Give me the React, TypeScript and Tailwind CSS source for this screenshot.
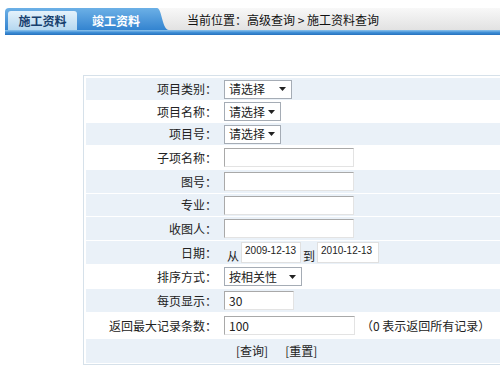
import React from "react";

const font = { fontFamily: '"Noto Sans CJK SC", "Noto Sans", sans-serif' };

function Select({ label, w }: { label: string; w: number }) {
  return (
    <div
      className="flex items-center justify-between h-[19px] border border-[#a5acb5] bg-white pl-[4px] pr-[5px] text-[12px] text-[#222]"
      style={{ width: w }}
    >
      <span>{label}</span>
      <svg width="7" height="4" viewBox="0 0 7 4">
        <path d="M0 0h7L3.5 4z" fill="#222" />
      </svg>
    </div>
  );
}

function Input({ w, value }: { w: number; value?: string }) {
  return (
    <div
      className="flex items-center h-[19px] border-t border-l border-[#a9a9a9] border-r border-b border-r-[#e3e3e3] border-b-[#e3e3e3] bg-white pl-[4px] text-[12px] text-[#222]"
      style={{ width: w }}
    >
      {value}
    </div>
  );
}

type Row = { label: string; content: React.ReactNode; blue: boolean; h: number };

export default function App() {
  const dateBox =
    "flex items-start h-[21px] bg-white border border-[#e0e0e0] pl-[3px] pt-[2px] whitespace-nowrap text-[10px] leading-[12px] text-[#222]";
  const rows: Row[] = [
    { label: "项目类别：", content: <Select label="请选择" w={68} />, blue: true, h: 22 },
    { label: "项目名称：", content: <Select label="请选择" w={57} />, blue: false, h: 22 },
    { label: "项目号：", content: <Select label="请选择" w={57} />, blue: true, h: 23 },
    { label: "子项名称：", content: <Input w={130} />, blue: false, h: 24 },
    { label: "图号：", content: <Input w={130} />, blue: true, h: 24 },
    { label: "专业：", content: <Input w={130} />, blue: true, h: 23 },
    { label: "收图人：", content: <Input w={130} />, blue: true, h: 24 },
    {
      label: "日期：",
      content: (
        <div className="flex items-end text-[12px] text-[#222]">
          <span className="ml-[3px] mr-[2px] leading-[14px]">从</span>
          <div className={`${dateBox} w-[60px]`} style={{ fontFamily: '"Liberation Sans", sans-serif' }}>
            2009-12-13
          </div>
          <span className="mx-[2px] leading-[14px]">到</span>
          <div className={`${dateBox} w-[62px]`} style={{ fontFamily: '"Liberation Sans", sans-serif' }}>
            2010-12-13
          </div>
        </div>
      ),
      blue: true,
      h: 24,
    },
    { label: "排序方式：", content: <Select label="按相关性" w={78} />, blue: false, h: 24 },
    { label: "每页显示：", content: <Input w={70} value="30" />, blue: true, h: 24 },
    {
      label: "返回最大记录条数：",
      content: (
        <div className="flex items-center whitespace-nowrap text-[12px] text-[#222]">
          <Input w={131} value="100" />
          <span className="ml-[6px]">（0 表示返回所有记录）</span>
        </div>
      ),
      blue: false,
      h: 26,
    },
    {
      label: "",
      content: (
        <div className="flex items-center gap-[17px] ml-[12px] text-[12px] text-[#222]">
          <span>[查询]</span>
          <span>[重置]</span>
        </div>
      ),
      blue: true,
      h: 25,
    },
  ];

  return (
    <div className="w-full h-[367px] bg-white overflow-hidden" style={font}>
      <div className="h-[8px]" />
      <div className="ml-[5px]">
        <div className="flex h-[22px]">
          <div className="flex w-[150px] shrink-0 items-end rounded-tl-[4px] bg-gradient-to-b from-[#6cb0e6] to-[#3384d0]">
            <div className="ml-[3px] flex h-[19px] w-[69px] items-center justify-center rounded-t-[3px] bg-gradient-to-b from-[#e4f2fb] to-[#b6d8f0] text-[12px] font-bold text-[#17406e]">
              施工资料
            </div>
            <div className="flex h-[19px] w-[78px] items-center justify-center text-[12px] font-bold text-white">
              竣工资料
            </div>
          </div>
          <svg width="14" height="22" viewBox="0 0 14 22" className="block shrink-0">
            <defs>
              <linearGradient id="tg" x1="0" y1="0" x2="0" y2="1">
                <stop offset="0" stopColor="#6cb0e6" />
                <stop offset="1" stopColor="#3384d0" />
              </linearGradient>
              <linearGradient id="gg" x1="0" y1="0" x2="0" y2="1">
                <stop offset="0" stopColor="#f8f8f8" />
                <stop offset="1" stopColor="#e2e2e2" />
              </linearGradient>
            </defs>
            <rect width="14" height="22" fill="url(#gg)" />
            <path d="M0 0H2C7 0 7 22 14 22H0Z" fill="url(#tg)" />
          </svg>
          <div className="flex flex-1 items-center bg-gradient-to-b from-[#f8f8f8] to-[#e2e2e2] pl-[18px] pt-[2px] text-[12px] text-[#111]">
            当前位置：高级查询 &gt; 施工资料查询
          </div>
        </div>
        <div className="h-[5px] bg-gradient-to-b from-[#8ec4ec] via-[#3f8fd6] to-[#2670bd]" />
      </div>

      <div className="mt-[40px] flex pl-[83px]">
        <div className="w-[470px] shrink-0 border border-[#d6e1ea] p-[2px] pb-[1px]">
          {rows.map((r, i) => (
            <div
              key={i}
              className={`flex items-center ${r.blue ? "bg-[#eaf1f8]" : "bg-white"} ${i > 0 ? "border-t border-white" : ""}`}
              style={{ height: r.h }}
            >
              <div className="w-[134px] shrink-0 pr-[3px] text-right text-[12px] text-[#222]">{r.label}</div>
              <div className="ml-[4px] flex items-center">{r.content}</div>
            </div>
          ))}
        </div>
      </div>
    </div>
  );
}
